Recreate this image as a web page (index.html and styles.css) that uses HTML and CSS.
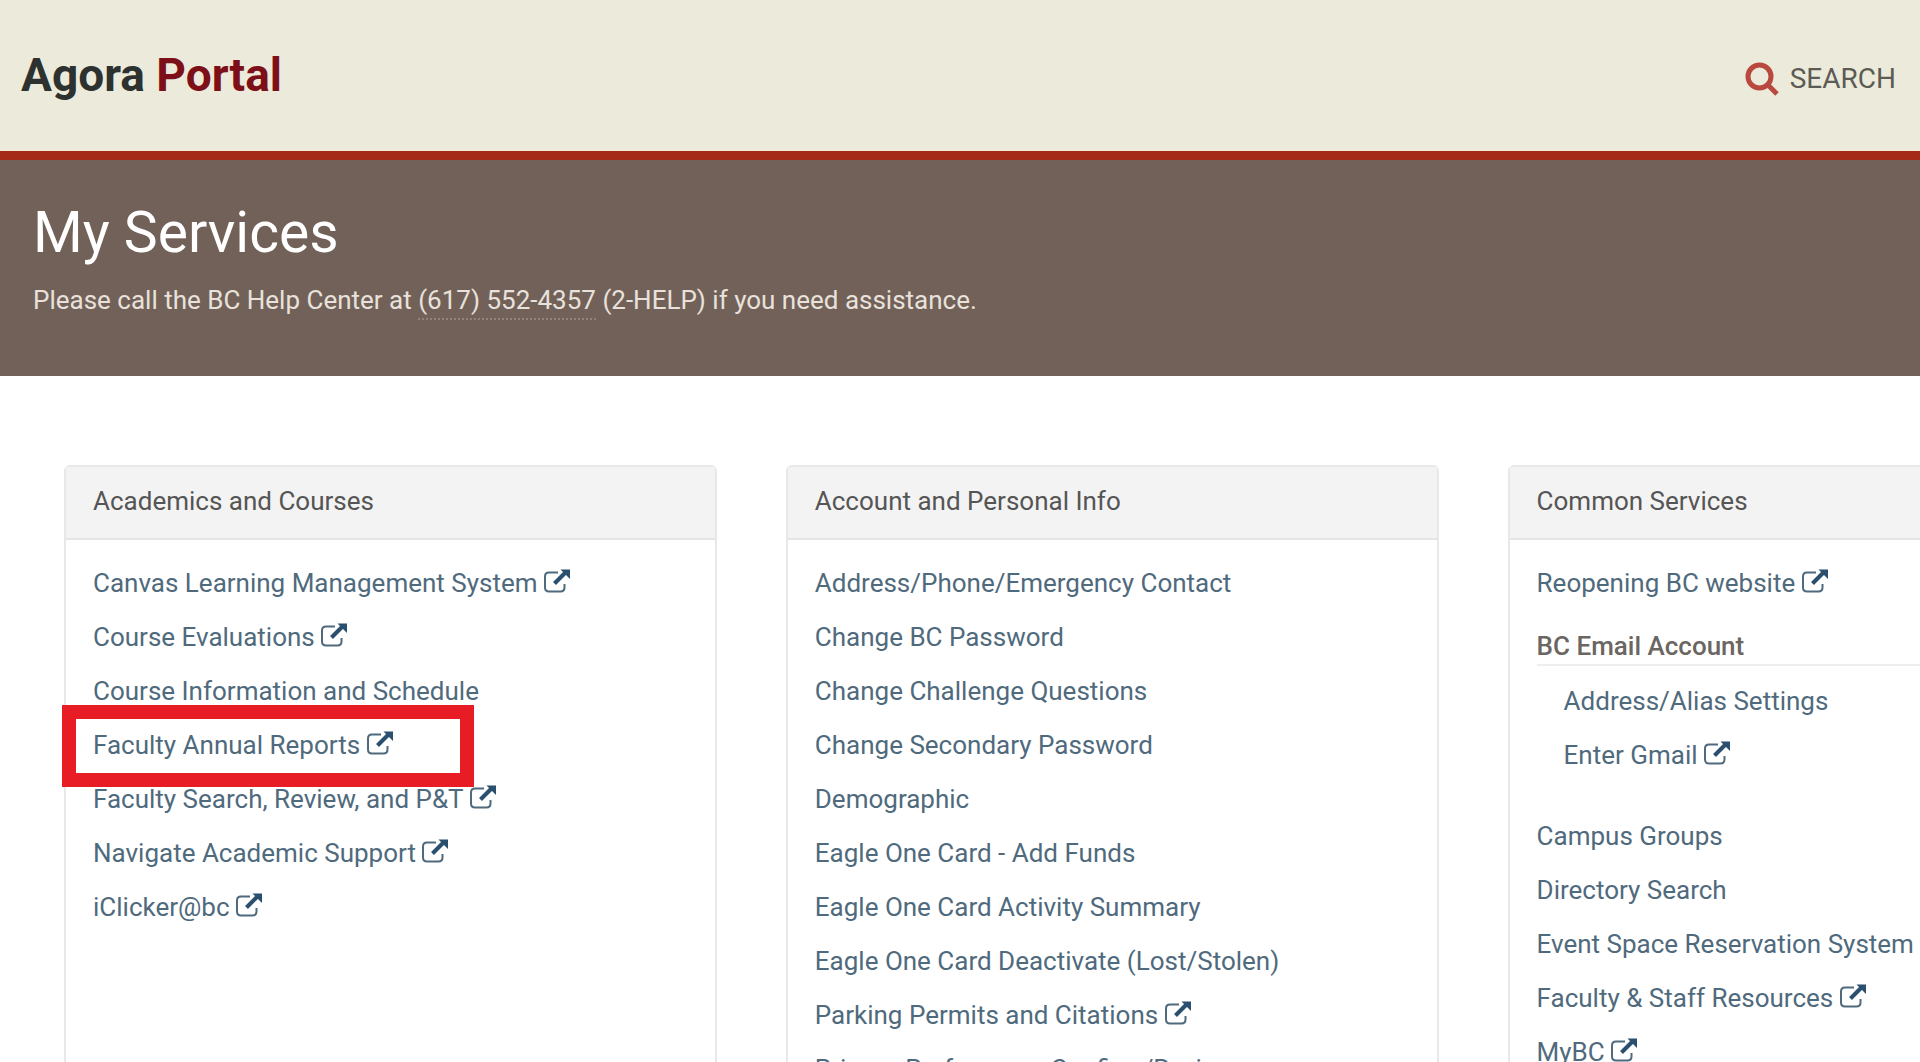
FILE: index.html
```html
<!DOCTYPE html>
<html lang="en">
<head>
    <meta charset="UTF-8">
    <meta name="viewport" content="width=device-width, initial-scale=1.0">
    <title>Agora Portal</title>
    <link rel="stylesheet" href="styles.css">
</head>
<body>
    <svg class="sprite" aria-hidden="true">
        <symbol id="external" viewBox="0 0 28 26">
            <path d="M15 4.500H6Q2 4.500 2 8.500V19.500Q2 23.500 6 23.500H17.500Q21.500 23.500 21.500 19.500V16" fill="none" stroke="currentColor" stroke-width="2"/>
            <path d="M11.500 15.500L22 5" fill="none" stroke="#2b4f6e" stroke-width="4"/>
            <path d="M17.500 1.500H27V11Z" fill="#2b4f6e"/>
        </symbol>
    </svg>

    <header class="topbar">
        <a class="logo" href="#">Agora <span>Portal</span></a>
        <button class="search" type="button">
            <svg class="search-icon" viewBox="0 0 34 34" aria-hidden="true">
                <circle cx="14.500" cy="14.500" r="11.500" fill="none" stroke="currentColor" stroke-width="5"/>
                <path d="M23 23L32 32" stroke="currentColor" stroke-width="5"/>
            </svg>
            SEARCH
        </button>
    </header>

    <section class="banner">
        <h1>My Services</h1>
        <p>Please call the BC Help Center at <a href="tel:6175524357">(617) 552-4357</a> (2-HELP) if you need assistance.</p>
    </section>

    <main class="services">
        <section class="card">
            <h2>Academics and Courses</h2>
            <ul>
                <li><a href="#">Canvas Learning Management System <svg class="ext"><use href="#external"/></svg></a></li>
                <li><a href="#">Course Evaluations <svg class="ext"><use href="#external"/></svg></a></li>
                <li><a href="#">Course Information and Schedule</a></li>
                <li class="highlighted"><a href="#">Faculty Annual Reports <svg class="ext"><use href="#external"/></svg></a></li>
                <li><a href="#">Faculty Search, Review, and P&amp;T <svg class="ext"><use href="#external"/></svg></a></li>
                <li><a href="#">Navigate Academic Support <svg class="ext"><use href="#external"/></svg></a></li>
                <li><a href="#">iClicker@bc <svg class="ext"><use href="#external"/></svg></a></li>
            </ul>
        </section>

        <section class="card">
            <h2>Account and Personal Info</h2>
            <ul>
                <li><a href="#">Address/Phone/Emergency Contact</a></li>
                <li><a href="#">Change BC Password</a></li>
                <li><a href="#">Change Challenge Questions</a></li>
                <li><a href="#">Change Secondary Password</a></li>
                <li><a href="#">Demographic</a></li>
                <li><a href="#">Eagle One Card - Add Funds</a></li>
                <li><a href="#">Eagle One Card Activity Summary</a></li>
                <li><a href="#">Eagle One Card Deactivate (Lost/Stolen)</a></li>
                <li><a href="#">Parking Permits and Citations <svg class="ext"><use href="#external"/></svg></a></li>
                <li><a href="#">Privacy Preferences Confirm/Review</a></li>
            </ul>
        </section>

        <section class="card">
            <h2>Common Services</h2>
            <ul>
                <li><a href="#">Reopening BC website <svg class="ext"><use href="#external"/></svg></a></li>
            </ul>
            <h3>BC Email Account</h3>
            <ul class="nested">
                <li><a href="#">Address/Alias Settings</a></li>
                <li><a href="#">Enter Gmail <svg class="ext"><use href="#external"/></svg></a></li>
            </ul>
            <ul>
                <li><a href="#">Campus Groups</a></li>
                <li><a href="#">Directory Search</a></li>
                <li><a href="#">Event Space Reservation System</a></li>
                <li><a href="#">Faculty &amp; Staff Resources <svg class="ext"><use href="#external"/></svg></a></li>
                <li><a href="#">MyBC <svg class="ext"><use href="#external"/></svg></a></li>
            </ul>
        </section>
    </main>
</body>
</html>
```

FILE: styles.css
```css
* {
    box-sizing: border-box;
}

body {
    display: flex;
    flex-direction: column;
    height: 100vh;
    margin: 0;
    overflow: hidden;
    background: #fff;
    color: #555;
    font-family: Roboto, Arial, sans-serif;
    font-size: 26px;
    line-height: 30px;
}

a {
    color: #4f6a7d;
    text-decoration: none;
}

h1, h2, h3, p, ul {
    margin: 0;
    padding: 0;
}

ul {
    list-style: none;
}

.sprite {
    position: absolute;
    width: 0;
    height: 0;
}

.topbar {
    display: flex;
    flex-shrink: 0;
    justify-content: space-between;
    align-items: center;
    padding: 48px 24px 48px 21px;
    background: #ecebdb;
    border-bottom: 9px solid #a52a18;
}

.logo {
    color: #2d312f;
    font-size: 46px;
    font-weight: bold;
    line-height: 55px;
}

.logo span {
    color: #7d0f18;
}

.search {
    display: flex;
    align-items: center;
    gap: 11px;
    padding: 6px 0 0;
    border: none;
    background: none;
    color: #5c5b55;
    font: inherit;
    font-size: 28px;
    cursor: pointer;
}

.search-icon {
    width: 34px;
    height: 34px;
    color: #b9493f;
}

.banner {
    flex-shrink: 0;
    padding: 40px 33px 60px;
    background: #716158;
    color: #e9e1dc;
}

.banner h1 {
    margin-bottom: 18px;
    color: #fff;
    font-size: 57px;
    font-weight: normal;
    line-height: 66px;
}

.banner p {
    line-height: 32px;
}

.banner a {
    color: inherit;
    padding-bottom: 3px;
    border-bottom: 2px dotted #8f8279;
}

/* columns run past the right edge on purpose */
.services {
    display: grid;
    flex: 1 0 auto;
    grid-template-columns: repeat(3, 34vw);
    gap: 69px;
    padding: 89px 0 0 64px;
}

.card {
    padding-bottom: 30px;
    border: 2px solid #e8e8e8;
    border-radius: 6px;
}

.card h2 {
    margin-bottom: 16px;
    padding: 19px 27px 22px;
    background: #f3f3f3;
    border-bottom: 2px solid #e5e5e5;
    color: #555;
    font-size: 26px;
    font-weight: normal;
    line-height: 30px;
}

.card h3 {
    margin: 21px 27px 8px;
    padding-bottom: 3px;
    border-bottom: 2px solid #eee;
    color: #6b6662;
    font-size: 26px;
    font-weight: 500;
    line-height: 30px;
}

.card ul {
    padding: 0 27px;
}

.card li {
    position: relative;
    line-height: 54px;
    white-space: nowrap;
}

.card .nested {
    margin-bottom: 27px;
    padding-left: 54px;
}

.ext {
    width: 28px;
    height: 26px;
    margin-left: -1px;
    vertical-align: -2px;
}

.highlighted::after {
    content: "";
    position: absolute;
    top: -13px;
    left: -31px;
    width: 384px;
    height: 54px;
    border: 14px solid #e81c24;
}
```
